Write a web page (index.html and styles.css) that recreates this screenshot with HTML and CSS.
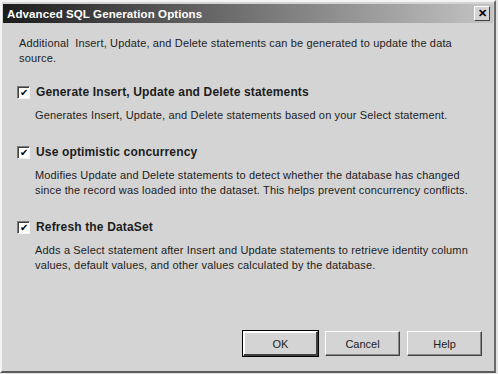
FILE: index.html
```html
<!DOCTYPE html>
<html lang="en">
<head>
    <meta charset="UTF-8">
    <title>Advanced SQL Generation Options</title>
    <link rel="stylesheet" href="styles.css">
</head>
<body>
    <div class="window">
        <div class="titlebar">
            <span class="title">Advanced SQL Generation Options</span>
            <span class="close-btn">&#x2715;</span>
        </div>

        <div class="content">
            <p class="intro">Additional&nbsp; Insert, Update, and Delete statements can be generated to update the data source.</p>

            <div class="option">
                <div class="option-head">
                    <span class="check">&#x2714;</span>
                    <span class="option-label">Generate Insert, Update and Delete statements</span>
                </div>
                <p class="option-desc">Generates Insert, Update, and Delete statements based on your Select statement.</p>
            </div>

            <div class="option">
                <div class="option-head">
                    <span class="check">&#x2714;</span>
                    <span class="option-label">Use optimistic concurrency</span>
                </div>
                <p class="option-desc">Modifies Update and Delete statements to detect whether the database has changed since the record was loaded into the dataset. This helps prevent concurrency conflicts.</p>
            </div>

            <div class="option">
                <div class="option-head">
                    <span class="check">&#x2714;</span>
                    <span class="option-label">Refresh the DataSet</span>
                </div>
                <p class="option-desc">Adds a Select statement after Insert and Update statements to retrieve identity column values, default values, and other values calculated by the database.</p>
            </div>
        </div>

        <div class="buttons">
            <button class="btn btn-default">OK</button>
            <button class="btn">Cancel</button>
            <button class="btn">Help</button>
        </div>
    </div>
</body>
</html>
```

FILE: styles.css
```css
* {
    margin: 0;
    padding: 0;
    box-sizing: border-box;
}

body {
    background: #e2e2e2;
    font-family: 'Liberation Sans', Arial, sans-serif;
    font-size: 11px;
    color: #1c1c1c;
}

.window {
    width: 496px;
    height: 373px;
    background: #d4d4d4;
    border: 2px solid;
    border-color: #f4f4f4 #6a6a6a #5c5c5c #f4f4f4;
    padding: 1px;
    display: flex;
    flex-direction: column;
}

.titlebar {
    height: 19px;
    margin-top: 1px;
    background: linear-gradient(to right, #1c1c1c, #5a5a5a 35%, #c4c4c4);
    display: flex;
    align-items: center;
    justify-content: space-between;
    padding: 0 3px 0 4px;
}

.title {
    color: #fff;
    font-weight: bold;
    font-size: 11.5px;
    letter-spacing: 0.1px;
}

.close-btn {
    width: 16px;
    height: 15px;
    background: #d4d4d4;
    border: 1px solid;
    border-color: #fff #404040 #404040 #fff;
    font-size: 11px;
    font-weight: bold;
    line-height: 13px;
    text-align: center;
    color: #000;
}

.content {
    padding: 13px 20px 0 16px;
    line-height: 15px;
    letter-spacing: 0.15px;
}

.intro {
    margin-bottom: 19px;
}

.option {
    margin-bottom: 22px;
}

.option-head {
    display: flex;
    align-items: center;
    gap: 6px;
    margin-left: -2px;
    margin-bottom: 8px;
}

.check {
    width: 13px;
    height: 13px;
    background: #fff;
    border: 1px solid;
    border-color: #7a7a7a #f4f4f4 #f4f4f4 #7a7a7a;
    box-shadow: inset 1px 1px 0 #404040;
    font-size: 10px;
    line-height: 11px;
    text-align: center;
    letter-spacing: 0;
    color: #000;
}

.option-label {
    font-weight: bold;
    font-size: 12px;
    letter-spacing: 0.15px;
}

.option-desc {
    padding-left: 16px;
}

.buttons {
    margin-top: auto;
    display: flex;
    justify-content: flex-end;
    gap: 7px;
    padding: 0 11px 14px 0;
}

.btn {
    width: 75px;
    height: 25px;
    background: #d4d4d4;
    border: 1px solid;
    border-color: #fff #404040 #404040 #fff;
    box-shadow: inset -1px -1px 0 #8a8a8a;
    font-family: 'Liberation Sans', Arial, sans-serif;
    font-size: 11px;
    color: #1c1c1c;
}

.btn-default {
    outline: 1px solid #000;
    box-shadow: inset -1px -1px 0 #404040, inset 1px 1px 0 #fff;
}
```
